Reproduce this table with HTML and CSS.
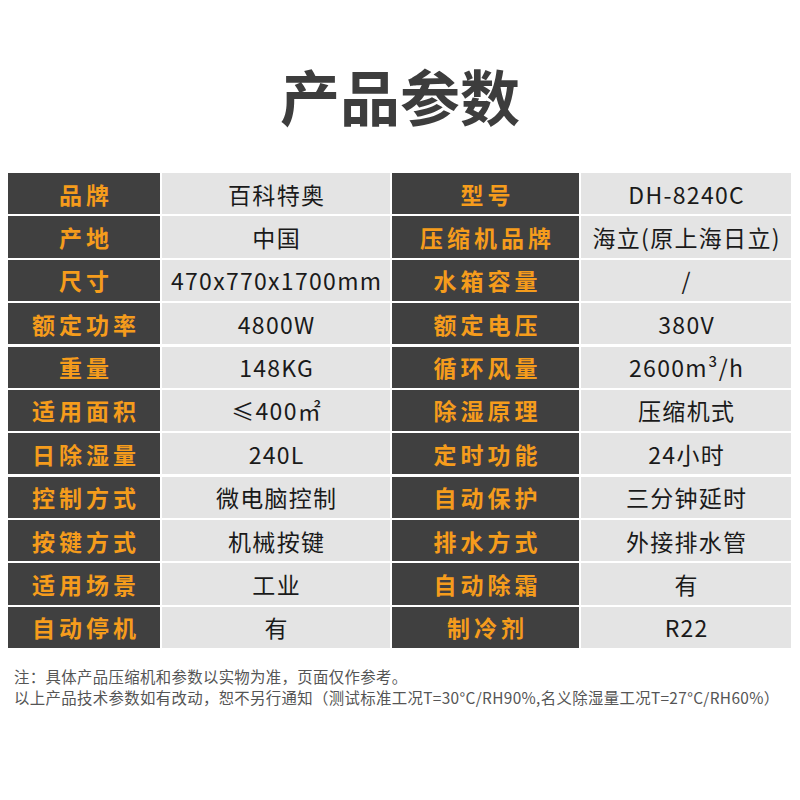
FILE: index.html
```html
<!DOCTYPE html>
<html lang="zh-CN">
<head>
<meta charset="utf-8">
<title>产品参数</title>
<link rel="stylesheet" href="styles.css">
</head>
<body>
<h1 class="title">产品参数</h1>
<div class="spec">
  <div class="lbl">品牌</div><div class="val">百科特奥</div><div class="lbl">型号</div><div class="val">DH-8240C</div>
  <div class="lbl">产地</div><div class="val">中国</div><div class="lbl">压缩机品牌</div><div class="val">海立(原上海日立)</div>
  <div class="lbl">尺寸</div><div class="val">470x770x1700mm</div><div class="lbl">水箱容量</div><div class="val">/</div>
  <div class="lbl">额定功率</div><div class="val">4800W</div><div class="lbl">额定电压</div><div class="val">380V</div>
  <div class="lbl">重量</div><div class="val">148KG</div><div class="lbl">循环风量</div><div class="val">2600m³/h</div>
  <div class="lbl">适用面积</div><div class="val">≤400㎡</div><div class="lbl">除湿原理</div><div class="val">压缩机式</div>
  <div class="lbl">日除湿量</div><div class="val">240L</div><div class="lbl">定时功能</div><div class="val">24小时</div>
  <div class="lbl">控制方式</div><div class="val">微电脑控制</div><div class="lbl">自动保护</div><div class="val">三分钟延时</div>
  <div class="lbl">按键方式</div><div class="val">机械按键</div><div class="lbl">排水方式</div><div class="val">外接排水管</div>
  <div class="lbl">适用场景</div><div class="val">工业</div><div class="lbl">自动除霜</div><div class="val">有</div>
  <div class="lbl">自动停机</div><div class="val">有</div><div class="lbl">制冷剂</div><div class="val">R22</div>
</div>
<div class="notes">
  <p>注：具体产品压缩机和参数以实物为准，页面仅作参考。</p>
  <p>以上产品技术参数如有改动，恕不另行通知（测试标准工况T=30°C/RH90%,名义除湿量工况T=27°C/RH60%）</p>
</div>
</body>
</html>
```
FILE: styles.css
```css
html, body {
  margin: 0;
  padding: 0;
  background: #ffffff;
}
body {
  font-family: "Noto Sans CJK SC", "Noto Sans", sans-serif;
  width: 800px;
  height: 800px;
  overflow: hidden;
}
.title {
  margin: 0;
  padding-top: 65px;
  height: 60px;
  line-height: 60px;
  font-size: 60px;
  font-weight: 700;
  color: #3d3d3d;
  text-align: center;
}
.spec {
  margin: 48px 0 0 8px;
  display: grid;
  grid-template-columns: 152px 228px 187px 210px;
  grid-auto-rows: 41.2px;
  column-gap: 2px;
  row-gap: 2.2px;
}
.lbl, .val {
  display: flex;
  align-items: center;
  justify-content: center;
  white-space: nowrap;
}
.lbl {
  background: #404040;
  color: #f59c1c;
  font-size: 23px;
  font-weight: 700;
  letter-spacing: 4px;
  padding-left: 4px;
}
.val {
  background: #e4e4e4;
  color: #1a1a1a;
  font-size: 23px;
  letter-spacing: 1.3px;
  padding-left: 1.3px;
}
.notes {
  margin: 18px 0 0 14px;
  color: #555555;
  font-size: 15.4px;
  letter-spacing: 0.35px;
  line-height: 21px;
}
.notes p {
  margin: 0;
  white-space: nowrap;
}
```
